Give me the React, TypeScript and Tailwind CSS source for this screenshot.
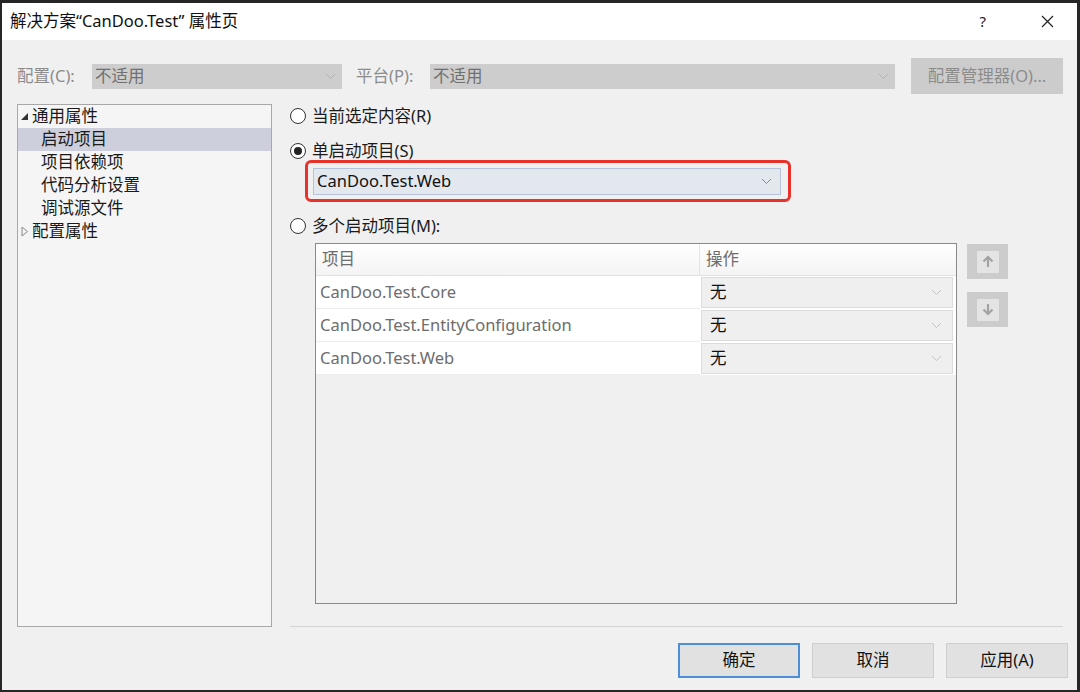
import React from 'react';

const font = { fontFamily: '"Noto Sans", "Noto Sans CJK SC", sans-serif' };

// small "v" chevron used by combo boxes
function Chevron({ color = '#9a9a9a' }: { color?: string }) {
  return (
    <svg width="11" height="7" viewBox="0 0 11 7" fill="none">
      <path d="M1 1l4.5 4.5L10 1" stroke={color} strokeWidth="1" />
    </svg>
  );
}

function Radio({ checked, label }: { checked?: boolean; label: string }) {
  return (
    <div className="flex h-[22px] items-center">
      <div className="flex h-[16px] w-[16px] items-center justify-center rounded-full border border-[#333] bg-white">
        {checked && <div className="h-[8px] w-[8px] rounded-full bg-[#222]" />}
      </div>
      <span className="ml-[6px] text-[16.5px] text-[#1a1a1a]">{label}</span>
    </div>
  );
}

function MoveButton({ down }: { down?: boolean }) {
  return (
    <div className="flex h-[35px] w-[41px] items-center justify-center bg-[#cccccc]">
      <div className="flex h-[22px] w-[22px] items-center justify-center bg-[#e4e4e4]">
        <svg width="12" height="13" viewBox="0 0 12 13" fill="none">
          {down ? (
            <path d="M6 1v10M1.5 6.5L6 11l4.5-4.5" stroke="#a3a3a3" strokeWidth="2.2" />
          ) : (
            <path d="M6 12V2M1.5 6.5L6 2l4.5 4.5" stroke="#a3a3a3" strokeWidth="2.2" />
          )}
        </svg>
      </div>
    </div>
  );
}

const treeItems = [
  { label: '项目依赖项' },
  { label: '代码分析设置' },
  { label: '调试源文件' },
];

const projects = ['CanDoo.Test.Core', 'CanDoo.Test.EntityConfiguration', 'CanDoo.Test.Web'];

export default function App() {
  return (
    <div className="h-[692px] w-[1080px] bg-[#262626] pb-[2px] pl-[2px] pr-[3px] pt-[3px]" style={font}>
      <div className="flex h-full w-full flex-col bg-[#f0f0f0]">
        {/* title bar */}
        <div className="flex h-[37px] items-center bg-white pl-[8px]">
          <span className="text-[16.5px] text-[#111]">解决方案“CanDoo.Test” 属性页</span>
          <span className="ml-auto text-[15px] text-[#222]">?</span>
          <svg className="ml-[55px] mr-[23px]" width="13" height="13" viewBox="0 0 13 13">
            <path d="M1 1l11 11M12 1L1 12" stroke="#222" strokeWidth="1.2" />
          </svg>
        </div>

        {/* configuration row */}
        <div className="mt-[18px] flex h-[36px] items-center pl-[15px] pr-[14px]">
          <span className="w-[75px] text-[16.5px] text-[#8c8c8c]">配置(C):</span>
          <div className="flex h-[25px] w-[250px] items-center justify-between bg-[#cdcdcd] pl-[3px] pr-[6px]">
            <span className="text-[16.5px] text-[#707070]">不适用</span>
            <Chevron color="#b0b0b0" />
          </div>
          <span className="ml-[14px] w-[74px] text-[16.5px] text-[#8c8c8c]">平台(P):</span>
          <div className="flex h-[25px] w-[465px] items-center justify-between bg-[#cdcdcd] pl-[3px] pr-[6px]">
            <span className="text-[16.5px] text-[#707070]">不适用</span>
            <Chevron color="#b0b0b0" />
          </div>
          <div className="ml-[16px] flex h-[36px] w-[152px] items-center justify-center bg-[#cccccc] text-[16.5px] text-[#8c8c8c]">
            配置管理器(O)...
          </div>
        </div>

        {/* main area */}
        <div className="mt-[10px] flex h-[523px] pl-[15px] pr-[14px]">
          {/* tree */}
          <div className="w-[255px] border border-[#a8a8a8] bg-[#f5f5f5] text-[16.5px] text-[#1a1a1a]">
            <div className="flex h-[23px] items-center pl-[2px]">
              <svg width="9" height="9" viewBox="0 0 9 9" className="mr-[3px]">
                <path d="M8 1v7H1z" fill="#333" />
              </svg>
              通用属性
            </div>
            <div className="flex h-[23px] items-center bg-[#cdd0dc] pl-[23px]">启动项目</div>
            {treeItems.map((t) => (
              <div key={t.label} className="flex h-[23px] items-center pl-[23px]">
                {t.label}
              </div>
            ))}
            <div className="flex h-[23px] items-center pl-[3px]">
              <svg width="8" height="11" viewBox="0 0 8 11" className="mr-[3px]">
                <path d="M1 1l5.5 4.5L1 10z" fill="none" stroke="#888" strokeWidth="1" />
              </svg>
              配置属性
            </div>
          </div>

          {/* right column */}
          <div className="ml-[18px] flex flex-1 flex-col border-b border-[#d4d4d4] pt-[1px]">
            <Radio label="当前选定内容(R)" />
            <div className="mt-[13px]">
              <Radio checked label="单启动项目(S)" />
            </div>
            <div className="relative ml-[23px] mt-[6px] w-[468px]">
              <div className="flex h-[27px] items-center justify-between border border-[#b6c3d6] bg-[#e3e8ee] pl-[3px] pr-[8px]">
                <span className="text-[16.5px] text-[#111]">CanDoo.Test.Web</span>
                <Chevron color="#8a8a8a" />
              </div>
              {/* red highlight annotation */}
              <div className="pointer-events-none absolute -bottom-[7px] -left-[8px] -right-[10px] -top-[8px] rounded-[6px] border-[3px] border-[#e8322c]" />
            </div>
            <div className="mt-[20px]">
              <Radio label="多个启动项目(M):" />
            </div>
            <div className="ml-[25px] mt-[6px] flex">
              <div className="flex h-[361px] w-[642px] flex-col border border-[#8a8a8a] bg-[#f0f0f0]">
                <div className="flex h-[32px] border-b border-[#e2e2e2] bg-gradient-to-b from-white to-[#f4f4f4] text-[16.5px] text-[#6d6d6d]">
                  <div className="flex w-[384px] items-center border-r border-[#e4e4e4] pl-[6px]">项目</div>
                  <div className="flex items-center pl-[6px]">操作</div>
                </div>
                {projects.map((p) => (
                  <div key={p} className="flex h-[33px]">
                    <div className="flex w-[384px] items-center border-b border-[#ececec] bg-white pl-[4px] text-[16.5px] text-[#6d6d6d]">
                      {p}
                    </div>
                    <div className="flex flex-1 items-center bg-white py-[1px] pl-[1px] pr-[3px]">
                      <div className="flex h-full w-full items-center justify-between border border-[#dcdcdc] bg-[#efefef] pl-[8px] pr-[10px]">
                        <span className="text-[16.5px] text-[#111]">无</span>
                        <Chevron color="#c4c4c4" />
                      </div>
                    </div>
                  </div>
                ))}
              </div>
              <div className="ml-[10px] mt-[1px] flex flex-col gap-[13px]">
                <MoveButton />
                <MoveButton down />
              </div>
            </div>
          </div>
        </div>

        {/* dialog buttons */}
        <div className="mt-[16px] flex justify-end gap-[12px] pr-[9px]">
          <div className="flex h-[35px] w-[122px] items-center justify-center border-2 border-[#4a8fd8] bg-[#e1e1e1] text-[16.5px] text-[#111]">
            确定
          </div>
          <div className="flex h-[35px] w-[122px] items-center justify-center border border-[#cfcfcf] bg-[#e1e1e1] text-[16.5px] text-[#111]">
            取消
          </div>
          <div className="flex h-[35px] w-[122px] items-center justify-center border border-[#cfcfcf] bg-[#e1e1e1] text-[16.5px] text-[#111]">
            应用(A)
          </div>
        </div>
      </div>
    </div>
  );
}
